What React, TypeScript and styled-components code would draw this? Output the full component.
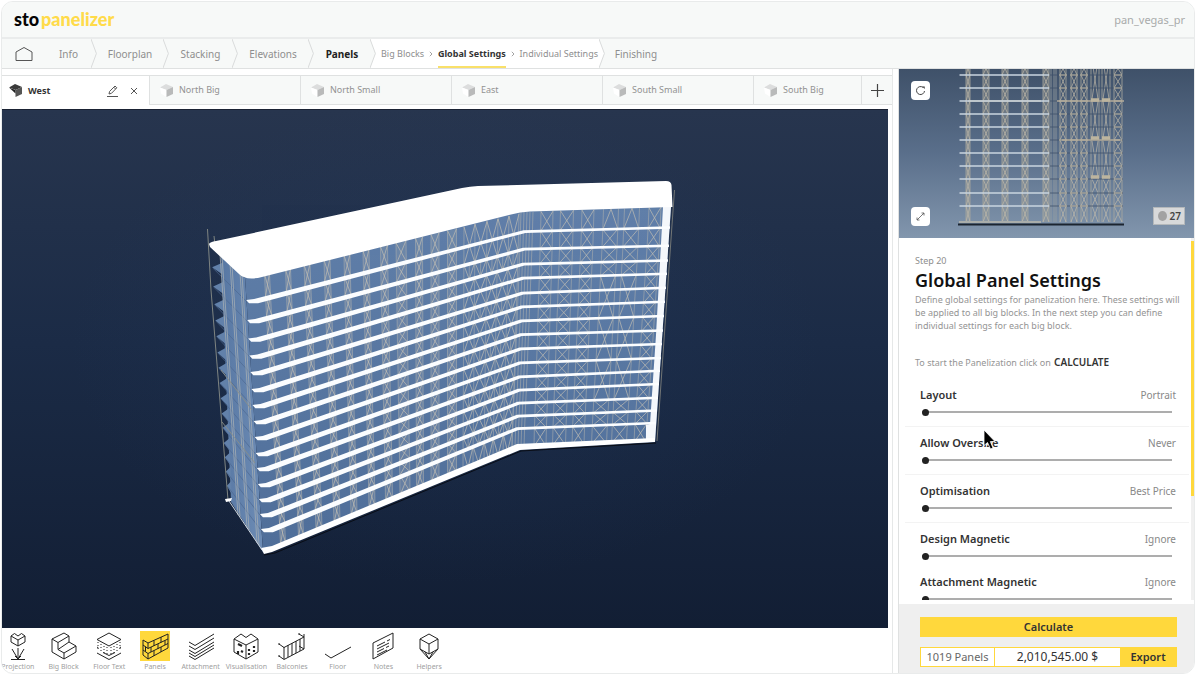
import React from "react";
import styled, { createGlobalStyle, css } from "styled-components";

const GlobalStyle = createGlobalStyle`
  * { box-sizing: border-box; }
  body { margin: 0; background: #fff; font-family: "Noto Sans", "Open Sans", sans-serif; color: #8e8e8e; }
  button, input { font-family: inherit; }
  button { border: 0; padding: 0; background: none; color: inherit; cursor: pointer; }
  svg { display: block; }
`;

const line = "#dfe1e1";
const yellow = "#ffd83c";

/* ---------- frame ---------- */

const Frame = styled.div`
  height: 100vh;
  min-height: 560px;
  padding: 1px 1px 2px 1px;
`;
const Window = styled.div`
  height: 100%;
  display: flex;
  flex-direction: column;
  border: 1px solid #e9ebeb;
  border-radius: 12px;
  overflow: hidden;
  background: #fff;
`;
const Header = styled.header`
  flex: none;
  height: 37px;
  padding: 0 9px 2px 12px;
  display: flex;
  align-items: center;
  justify-content: space-between;
  background: #f7f9f8;
  border-bottom: 2px solid #eaecec;
`;
const Logo = styled.h1`
  margin: 0;
  display: flex;
  gap: 2px;
  align-items: baseline;
  font: 900 18px/20px Lato, sans-serif;
  color: #050505;
`;
const LogoAccent = styled.span`
  color: #ffdb4a;
`;
const Project = styled.span`
  padding-top: 2px;
  font-size: 11px;
  line-height: 16px;
  color: #a9abab;
`;

/* ---------- step navigation ---------- */

const Steps = styled.nav`
  flex: none;
  height: 30px;
  display: flex;
  background: #f7f9f8;
  border-bottom: 1px solid ${line};
`;
const StepLink = styled.a<{ $w: number; $active?: boolean }>`
  flex: none;
  width: ${(p) => p.$w}px;
  display: flex;
  align-items: center;
  justify-content: center;
  font-size: 10px;
  text-decoration: none;
  color: ${(p) => (p.$active ? "#222" : "#8e8e8e")};
  font-weight: ${(p) => (p.$active ? 700 : 400)};
`;
const SubSteps = styled.div`
  flex: none;
  width: 223px;
  display: flex;
  align-items: stretch;
  justify-content: space-between;
  padding: 0 1px 0 5px;
  background: #fff;
`;
const SubStep = styled.a<{ $active?: boolean }>`
  display: flex;
  align-items: center;
  padding-top: 2px;
  border-bottom: 2px solid ${(p) => (p.$active ? "#f9e069" : "transparent")};
  font-size: 9px;
  white-space: nowrap;
  text-decoration: none;
  color: ${(p) => (p.$active ? "#333" : "#8e8e8e")};
  font-weight: ${(p) => (p.$active ? 700 : 400)};
`;
const Separator = styled.svg`
  flex: none;
  align-self: center;
`;
const ChevronSvg = styled.svg`
  flex: none;
`;

const Chevron = ({ left = "#f7f9f8", right = "#f7f9f8" }: { left?: string; right?: string }) => (
  <ChevronSvg width="6" height="29" viewBox="0 0 6 29">
    <rect width="6" height="29" fill={right} />
    <path d="M0 0L5.4 14.5L0 29Z" fill={left} />
    <path d="M0 0L5.4 14.5L0 29" fill="none" stroke="#d9dbdb" />
  </ChevronSvg>
);
const Gt = () => (
  <Separator width="4" height="6" viewBox="0 0 4 6">
    <path d="M.8 .8L3 3L.8 5.2" fill="none" stroke="#999" strokeWidth=".9" />
  </Separator>
);

/* ---------- main split ---------- */

const Main = styled.main`
  flex: 1;
  min-height: 0;
  display: flex;
`;
const Workspace = styled.section`
  flex: 1;
  min-width: 0;
  display: flex;
  flex-direction: column;
  padding: 6px 0 0;
  margin-right: 5px;
  border-right: 1px solid #e6e8e8;
`;
const Tabs = styled.div`
  flex: none;
  height: 30px;
  display: flex;
  border-top: 1px solid ${line};
`;
const Tab = styled.div<{ $active?: boolean }>`
  flex: ${(p) => (p.$active ? "none" : "0 1 151px")};
  width: ${(p) => (p.$active ? 147 : 151)}px;
  min-width: 0;
  display: flex;
  align-items: center;
  padding: 0 11px 0 ${(p) => (p.$active ? 7 : 10)}px;
  overflow: hidden;
  ${(p) =>
    !p.$active &&
    css`
      background: #f7f9f8;
      border-left: 1px solid ${line};
      border-bottom: 1px solid ${line};
    `}
  &:nth-last-child(2) { flex: 1; }
`;
const TabName = styled.button<{ $active?: boolean }>`
  flex: 1;
  min-width: 0;
  display: flex;
  align-items: center;
  gap: 6px;
  text-align: left;
  white-space: nowrap;
  font-size: 9px;
  line-height: 14px;
  color: ${(p) => (p.$active ? "#333" : "#929292")};
  font-weight: ${(p) => (p.$active ? 700 : 400)};
`;
const TabTools = styled.span`
  flex: none;
  display: flex;
  align-items: center;
  gap: 12px;
`;
const AddTab = styled.button`
  flex: none;
  width: 31px;
  display: grid;
  place-items: center;
  background: #f7f9f8;
  border-left: 1px solid ${line};
  border-bottom: 1px solid ${line};
`;
const Viewport = styled.div`
  flex: 1;
  min-height: 0;
  margin: 4px 4px 0 0;
  border-top: 1px solid #1a2233;
  background:
    radial-gradient(ellipse at 50% 45%, rgba(40, 68, 112, 0.22), rgba(20, 35, 60, 0) 60%),
    linear-gradient(#27354e, #1b2b46 45%, #121e34);
  overflow: hidden;
`;
const Scene = styled.svg`
  width: 100%;
  height: 100%;
`;

/* ---------- bottom toolbar ---------- */

const Toolbar = styled.nav`
  flex: none;
  height: 45px;
  width: 457px;
  margin-left: -7px;
  display: grid;
  grid-template-columns: repeat(10, 1fr);
`;
const Tool = styled.button`
  display: flex;
  flex-direction: column;
  align-items: center;
  padding-top: 3px;
  font-size: 7px;
  line-height: 10px;
  white-space: nowrap;
  color: #a0a0a0;
`;
const ToolIcon = styled.span<{ $active?: boolean }>`
  width: 30px;
  height: 30px;
  margin-bottom: 1px;
  background: ${(p) => (p.$active ? yellow : "transparent")};
`;

/* ---------- side panel ---------- */

const Side = styled.aside`
  flex: none;
  width: 296px;
  display: flex;
  flex-direction: column;
  border-left: 1px solid ${line};
`;
const Preview = styled.div`
  flex: none;
  height: 169px;
  display: grid;
  background: linear-gradient(#3f5169, #5a6f8b 50%, #8296ad);
  > * { grid-area: 1 / 1; min-height: 0; }
`;
const PreviewTools = styled.div`
  display: flex;
  flex-direction: column;
  justify-content: space-between;
  padding: 12px;
`;
const PreviewButton = styled.button`
  width: 19px;
  height: 19px;
  display: grid;
  place-items: center;
  border-radius: 4px;
  background: #fff;
`;
const CountBadge = styled.span`
  place-self: end;
  margin: 0 9px 13px;
  height: 18px;
  display: flex;
  align-items: center;
  gap: 3px;
  padding: 0 3px 0 4px;
  border: 1px solid #b4b8bb;
  background: #d8d9da;
  color: #444;
  font-size: 10px;
  font-weight: 600;
`;
const Dot = styled.i`
  width: 9px;
  height: 10px;
  border-radius: 50%;
  background: #a2a2a2;
`;
const PanelBody = styled.div`
  flex: 1;
  min-height: 0;
  display: flex;
  margin-bottom: 4px;
  overflow: hidden;
`;
const PanelText = styled.div`
  flex: 1;
  min-width: 0;
  padding: 16px 8px 0 16px;
`;
const ScrollTrack = styled.div`
  flex: none;
  width: 3px;
  padding-top: 3px;
  background: #f0f0f0;
`;
const ScrollThumb = styled.div`
  height: 71%;
  background: ${yellow};
`;
const StepNo = styled.p`
  margin: 0;
  font-size: 9px;
  line-height: 14px;
`;
const Title = styled.h2`
  margin: 0;
  font-size: 18px;
  line-height: 25px;
  font-weight: 600;
  color: #111;
`;
const Copy = styled.p`
  margin: 0 0 24px;
  font-size: 9px;
  line-height: 13px;
  color: #949494;
  strong { color: #333; font-size: 10px; font-weight: 600; margin-left: 1px; }
`;
const Settings = styled.div`
  margin: -14px -6px 0 -10px;
`;
const Setting = styled.div<{ $plain?: boolean }>`
  height: ${(p) => (p.$plain ? 43 : 48)}px;
  padding: 8px 13px 0 15px;
  border-bottom: 1px solid ${(p) => (p.$plain ? "transparent" : "#f3f3f3")};
`;
const SettingHead = styled.div`
  display: flex;
  justify-content: space-between;
  font-size: 10px;
  line-height: 16px;
  color: #888;
  label { font-size: 11px; font-weight: 600; color: #333; }
`;
const Slider = styled.input`
  appearance: none;
  display: block;
  width: calc(100% - 6px);
  height: 8px;
  margin: 5px 0 0 2px;
  background: linear-gradient(#adadad, #adadad) center / 100% 2px no-repeat;
  &::-webkit-slider-thumb {
    appearance: none;
    width: 7px;
    height: 7px;
    border-radius: 50%;
    background: #222;
  }
`;
const Footer = styled.footer`
  flex: none;
  height: 69px;
  padding: 13px 17px 6px 21px;
  display: flex;
  flex-direction: column;
  gap: 10px;
  background: #efefef;
`;
const Calculate = styled.button`
  height: 20px;
  background: ${yellow};
  color: #333;
  font-size: 11px;
  line-height: 20px;
  font-weight: 600;
`;
const Totals = styled.div`
  height: 20px;
  display: flex;
  border: 1px solid ${yellow};
  background: #fff;
  font-size: 12px;
  line-height: 18px;
  text-align: center;
  color: #333;
`;
const PanelTotal = styled.span`
  flex: none;
  width: 74px;
  font-size: 11px;
  color: #666;
  border-right: 1px solid ${yellow};
`;
const PriceTotal = styled.span`
  flex: 1;
`;
const ExportButton = styled.button`
  flex: none;
  width: 56px;
  background: ${yellow};
  color: #333;
  font-size: 11px;
  line-height: 18px;
  font-weight: 600;
`;
const Cursor = styled.svg`
  position: absolute;
  left: 983px;
  top: 429px;
  pointer-events: none;
`;

/* ---------- building drawing ---------- */

type P = [number, number];
const f = (p: P) => `${p[0].toFixed(1)} ${p[1].toFixed(1)}`;
const seg = (a: P, b: P) => `M${f(a)}L${f(b)}`;

const leftY = [279, 301, 321, 339.5, 356.5, 373, 390, 406, 422, 438, 454, 469, 485, 500, 515, 530, 552];
const kneeY = [212, 231.7, 249.3, 264.3, 278.3, 293.3, 307, 321, 334.7, 349, 363, 377, 390.3, 403.3, 416.3, 428.7, 447];
const rightY = [207, 227.7, 246, 260.7, 274, 288, 302, 316.3, 330.7, 344.3, 358.3, 371, 384.3, 398, 410.7, 423.3, 441.7];
const rows = leftY.length - 1;
const L = (k: number): P => [245 + (k / rows) * 17, leftY[k]];
const K = (k: number): P => [526 - (k / rows) * 8, kneeY[k]];
const R = (k: number): P => [671 - (k / rows) * 16, rightY[k]];

const onLeft = (top: number, bottom: number, k: number): P => {
  const x = top + (bottom - top) * (k / rows);
  const a = L(k), b = K(k);
  return [x, a[1] + ((b[1] - a[1]) * (x - a[0])) / (b[0] - a[0])];
};
const onRight = (top: number, bottom: number, k: number): P => {
  const x = top + (bottom - top) * (k / rows);
  const a = K(k), b = R(k);
  return [x, a[1] + ((b[1] - a[1]) * (x - a[0])) / (b[0] - a[0])];
};

const leftCols: [number, number, number][] = [
  [267, 283, 2.5], [288, 301, 2.5], [307, 319, 3], [327, 337, 3], [347, 354, 3], [366, 372, 3],
  [384, 389, 3.5], [401, 405, 5], [419, 420, 3.5], [435, 435, 4], [452, 452, 4.5],
];
const zigCols: [number, number][] = [[464, 463], [475, 473], [487, 484], [498, 493], [509, 503], [519, 512]];
const rightCols: [number, number, number][] = [
  [547, 540, 6], [567, 559, 6.5], [588, 578, 6], [611, 599, 7.5], [632, 619, 7.5], [655, 640, 6],
];

let fills = "";
let posts = "";
let braces = "";
leftCols.forEach(([t, b, w]) => {
  fills += `M${f(onLeft(t - w, b - w, 0))}L${f(onLeft(t + w, b + w, 0))}L${f(onLeft(t + w, b + w, rows))}L${f(onLeft(t - w, b - w, rows))}Z`;
});
for (let k = 0; k < rows; k++) {
  leftCols.forEach(([t, b, w]) => {
    const a0 = onLeft(t - w, b - w, k), a1 = onLeft(t - w, b - w, k + 1);
    const b0 = onLeft(t + w, b + w, k), b1 = onLeft(t + w, b + w, k + 1);
    posts += seg(a0, a1) + seg(b0, b1);
    braces += seg(a0, b1) + seg(b0, a1);
  });
  zigCols.forEach(([t, b], i) => {
    const next = zigCols[i + 1];
    const a0 = onLeft(t, b, k), a1 = onLeft(t, b, k + 1);
    posts += seg(a0, a1);
    if (next) {
      const m0 = onLeft((t + next[0]) / 2, (b + next[1]) / 2, k);
      const m1 = onLeft((t + next[0]) / 2, (b + next[1]) / 2, k + 1);
      const n0 = onLeft(next[0], next[1], k), n1 = onLeft(next[0], next[1], k + 1);
      braces += k % 3 === 1 ? seg(m0, a1) + seg(m0, n1) : seg(a0, m1) + seg(m1, n0);
      if (k % 3 === 2) posts += seg(m0, m1);
    }
  });
  [521, 524, 527, 530, 533].forEach((x) => {
    posts += seg([x - (k / rows) * 9, kneeY[k]], [x - ((k + 1) / rows) * 9, kneeY[k + 1]]);
  });
  rightCols.forEach(([t, b, w], i) => {
    const a0 = onRight(t - w, b - w, k), a1 = onRight(t - w, b - w, k + 1);
    const b0 = onRight(t + w, b + w, k), b1 = onRight(t + w, b + w, k + 1);
    posts += seg(a0, a1) + seg(b0, b1);
    if ((i === 3 || i === 4) && k >= 4 && k < 13) {
      if ((k - 4) % 3 === 0) {
        const far = k + 3;
        braces += seg(a0, onRight(t + w, b + w, far)) + seg(b0, onRight(t - w, b - w, far)) + seg(a0, b0);
      }
    } else if ((i === 3 || i === 4) && k === 0) {
      const m = onRight(t, b, 0);
      braces += seg(m, a1) + seg(m, b1);
    } else {
      braces += seg(a0, b1) + seg(b0, a1);
    }
  });
}

const slabs = Array.from({ length: rows - 1 }, (_, i) => {
  const k = i + 1;
  const l = L(k), n = K(k), r = R(k);
  return `M${f([l[0], l[1] - 1])}L${f([l[0] + 8, l[1] - 2])}L${f([n[0] - 2, n[1] - 1.5])}L${f([r[0], r[1] - 1.5])}` +
    `L${f([r[0], r[1] + 1])}L${f([n[0], n[1] + 1.3])}L${f([l[0] + 12, l[1] + 2.2])}L${f([l[0] + 3, l[1] + 2.2])}Z`;
}).join("");

/* balcony fins that stand out past the narrow side of the tower */
const fins = Array.from({ length: rows - 1 }, (_, i) => {
  const k = i + 1;
  const y = leftY[k] - 33 - 12 * (k / rows);
  const outer = 211 + 17 * (k / rows);
  const inner = 222 + 9 * (k / rows);
  return `M${outer} ${y}L${inner + 1} ${y - 5}V${y + 8}Z`;
}).join("");
const floorEdges = Array.from({ length: rows - 1 }, (_, i) => {
  const k = i + 1;
  return seg([212 + 17 * (k / rows), leftY[k] - 32 - 12 * (k / rows)], L(k));
}).join("");

const sideTop: P[] = [[220, 254], [230, 263], [240, 272]];
const sideBottom: P[] = [[238, 515], [247, 528], [257, 543]];

const Building = () => (
  <Scene viewBox="2 110 886 518" preserveAspectRatio="xMidYMid slice" role="img" aria-label="Building model, west side">
    <defs>
      <linearGradient id="glass" x1="0" y1="0" x2="0" y2="1">
        <stop offset="0" stopColor="#607fa9" />
        <stop offset="1" stopColor="#4f6e99" />
      </linearGradient>
      <linearGradient id="flank" x1="0" y1="0" x2="1" y2="0">
        <stop offset="0" stopColor="#5777a3" />
        <stop offset="1" stopColor="#6d8cb5" />
      </linearGradient>
    </defs>
    <path d="M221 252L245 278L263 552L231 502Z" fill="url(#flank)" />
    <path d={fins} fill="#6281aa" />
    <path d={floorEdges} stroke="#4d6890" strokeWidth=".7" />
    <path
      d={sideTop.map((t, i) => seg(t, sideBottom[i]) + seg([t[0] + 2, t[1] + 2], [sideBottom[i][0] + 2, sideBottom[i][1] + 2])).join("")}
      stroke="#a4adb4" strokeWidth=".8"
    />
    <path d="M207.500 229L211 290L228 500M214 236L215 245M221 370L252 410M222 422L255 463" fill="none" stroke="#8a8f88" strokeWidth=".9" />
    <path d="M245 277L440 231L526 210L671 205L655 442L518 447L263 551Z" fill="url(#glass)" />
    <path d={fills} fill="#8d9cae" opacity=".35" />
    <path d={posts} stroke="#a9adad" strokeWidth=".8" opacity=".75" />
    <path d={braces} stroke="#c3bfb4" strokeWidth=".85" opacity=".8" fill="none" />
    <path d="M663 207L671 207L655 442H646V425L650 424L656 335Z" fill="#f4f7fb" />
    <path d={slabs} fill="#fbfdff" />
    <path d="M261 548L272 546L517 444L655 438L655 442L520 450L272 552L264 554Z" fill="#fff" />
    <path d="M264 555L275 553L521 451L656 443" fill="none" stroke="#090d16" />
    <path d="M225 499l7 -1l-1 3l-5 1z" fill="#fff" />
    <path d="M229 501L262 550" stroke="#cdd5de" />
    <path d="M674.500 190L672 225L657 441" fill="none" stroke="#7c7e7a" strokeWidth=".9" />
    <path d="M209 244Q210 242 216 241L462 188Q470 186.500 478 186L666 181Q671 181 671.500 185L672.500 207L530 211.500Q520 212 511 214.500L262 277Q246 281 239 274L210 247Z" fill="#fff" />
  </Scene>
);

/* ---------- preview drawing ---------- */

const floorYs = [75, 88, 101, 114, 127, 140, 153, 166, 179, 193, 206, 222];
let tower = "";
let towerX = "";
const truss = (cx: number, w: number, y0: number, y1: number) => {
  towerX += `M${cx - w} ${y0}L${cx + w} ${y1}M${cx + w} ${y0}L${cx - w} ${y1}`;
};
([[968, 2], [986, 3], [1005, 3], [1025, 3], [1046, 3], [1063, 3], [1074, 3], [1084, 3], [1118, 4]] as P[]).forEach(([cx, w]) => {
  tower += `M${cx - w} 69V222M${cx + w} 69V222`;
  [62, ...floorYs].slice(0, -1).forEach((y, i) => truss(cx, w, y, floorYs[i]));
});
[1095, 1106].forEach((cx) => {
  tower += `M${cx - 4} 69V222M${cx + 4} 69V222`;
  [[60, 99], [101, 138], [141, 177], [179, 193], [193, 206], [206, 222]].forEach(([a, b]) => truss(cx, 3, a, b));
});

const Elevation = () => (
  <Scene viewBox="899 69 295 169" preserveAspectRatio="xMidYMid slice" role="img" aria-label="Elevation preview">
    <path d="M966 69h4V222h-4zM983 69h6V222h-6zM1002 69h6V222h-6zM1022 69h6V222h-6zM1043 69h6V222h-6z" fill="#a9a698" opacity=".35" />
    <path d={tower} stroke="#aaa99f" strokeWidth=".9" opacity=".9" />
    <path d={towerX} stroke="#c4bdab" strokeWidth=".8" opacity=".85" />
    <path d="M1051 69V222M1054 69V222M1056 69V222" stroke="#99a0a2" opacity=".8" />
    <path d={floorYs.slice(0, -1).map((y) => `M1050 ${y}H1123`).join("")} stroke="#40526a" strokeWidth=".8" />
    <path d={floorYs.slice(0, -1).map((y) => [1063, 1074, 1084, 1118].map((x) => `M${x - 4} ${y}h8`).join("")).join("")} stroke="#c9bfa8" strokeWidth="1.2" />
    <path d="M968 101H1041M1057 101H1124M986 140H1024M1062 140H1120" stroke="#b5ad9c" strokeWidth="1.400" />
    <path d="M1091 100h8M1102 100h8M1091 138h8M1102 138h8M1091 177h8M1102 177h8" stroke="#bdb59f" strokeWidth="3.500" />
    <path d={floorYs.slice(0, -1).map((y) => `M959.500 ${y}H1049`).join("")} stroke="#c9d5df" strokeWidth="1.300" />
    <path d="M959 222H1041" stroke="#a9adab" strokeWidth="2" />
    <path d="M958 224.500H1124" stroke="#1b2430" strokeWidth="2" />
  </Scene>
);

/* ---------- icons ---------- */

const Cube = ({ dark }: { dark?: boolean }) => (
  <svg width="13" height="13" viewBox="0 0 13 13">
    <path d="M0 3.500L6 0L13 3L6.500 6Z" fill={dark ? "#3a3a3a" : "#dcdddd"} />
    <path d="M0 3.500L6.500 6V13L1 9.500Z" fill="#fff" />
    <path d="M6.500 6L13 3V10L6.500 13Z" fill={dark ? "#555" : "#b9baba"} />
    {dark && <path d="M0 3.500L6.500 6V9.500Z" fill="#222" />}
  </svg>
);

const icons: Record<string, React.ReactNode> = {
  Projection: <path d="M15 5l3.500-2.500L22 5v6l-7 4-7-4V5l3.500-2.500zM8 5l7 4 7-4M15 9v6M15 17v10.500M8 28.500h14M9 18l6 10 6-10M12 25l3 3 3-3" />,
  "Big Block": <path d="M3 8L15 2l5 3v6l7 4v6l-12 7-12-7zM3 8l6 3.500L20 5M9 11.500v7l6 3.500 12-7M15 22v6M9 18.500L20 11" />,
  "Floor Text": (
    <>
      <path d="M15 2l12 6.500L15 15 3 8.500zM3 16l1.500 1M27 16l-1.500 1M3 22l12 6.500L27 22M9 21.500l6 3 6-3" />
      <path d="M4 11v7M7 13v7M10 15v7M13 16v7M17 16v7M20 15v7M23 13v7M26 11v7" strokeDasharray="1 2" />
    </>
  ),
  Panels: <path d="M3 9l5 3L28 3v14L8 28l-5-4zM3 14l5 3.500L28 8M3 19l5 3.500L28 12.500M8 12v5.500M5.500 15.500v5M8 22.500V28M14 9.500v5.500M21 6v5.500M11 16v5M18 13v5M25 9.500v4.500M14 19.500v5.500M21 16v5" />,
  Attachment: <path d="M3 11l6 3.500L28 3M3 15l6 3.500L28 7M3 19l6 3.500L28 11M3 22l6 3.500L28 14M3 25l6 3.500L28 17" />,
  Visualisation: (
    <>
      <path d="M3 8l7-5 5 3.500 5-3.500 7 5v13l-12 7-12-7zM3 8l12 6 12-6M15 14v14" />
      <path d="M7 13l4 2M7 20v3M10 20l2 1M18 18v2M18 22v2M23 15v2M23 19v2" strokeWidth="2.200" />
    </>
  ),
  Balconies: <path d="M2 13l5 3.500L27 6l-5-3M2 25l5 3.500L27 18l-5-3M7 16v12M11 14v12M15 12v12M19 10v12M23 8v12M27 3v15M2 12v2M2 24v2M22 2v2" />,
  Floor: <path d="M2 23l6 4L28 16" />,
  Notes: <path d="M5 12L25 2v15L5 28zM9 15l8-4M19 10l3-1.500M9 18l12-6M9 21l7-3.500M18 16.500l3-1.500M9 24l10-5" />,
  Helpers: <path d="M15 3l9 5v10l-9 10-9-10V8zM6 8l9 5 9-5M15 13v10M6 18l9 5 9-5M11 21l4 7 4-7" />,
};

const tabs = ["North Big", "North Small", "East", "South Small", "South Big"];
const settings: [string, string][] = [
  ["Layout", "Portrait"],
  ["Allow Oversize", "Never"],
  ["Optimisation", "Best Price"],
  ["Design Magnetic", "Ignore"],
  ["Attachment Magnetic", "Ignore"],
];

export default function App() {
  return (
    <Frame>
      <GlobalStyle />
      <Window>
        <Header>
          <Logo>
            <span>sto</span>
            <LogoAccent>panelizer</LogoAccent>
          </Logo>
          <Project>pan_vegas_pr</Project>
        </Header>
        <Steps>
          <StepLink href="#home" $w={44} aria-label="Home">
            <svg width="18" height="16" viewBox="0 0 18 16" fill="none" stroke="#555">
              <path d="M1 6L9 1.500L17 6V14.500H1Z" strokeLinejoin="round" />
            </svg>
          </StepLink>
          <StepLink href="#info" $w={45}>Info</StepLink>
          <Chevron />
          <StepLink href="#floorplan" $w={66}>Floorplan</StepLink>
          <Chevron />
          <StepLink href="#stacking" $w={63}>Stacking</StepLink>
          <Chevron />
          <StepLink href="#elevations" $w={70}>Elevations</StepLink>
          <Chevron />
          <StepLink href="#panels" $w={56} $active>Panels</StepLink>
          <Chevron right="#fff" />
          <SubSteps>
            <SubStep href="#big-blocks">Big Blocks</SubStep>
            <Gt />
            <SubStep href="#global" $active>Global Settings</SubStep>
            <Gt />
            <SubStep href="#individual">Individual Settings</SubStep>
          </SubSteps>
          <Chevron left="#fff" />
          <StepLink href="#finishing" $w={62}>Finishing</StepLink>
        </Steps>
        <Main>
          <Workspace>
            <Tabs>
              <Tab $active>
                <TabName $active><Cube dark />West</TabName>
                <TabTools>
                  <button aria-label="Rename tab">
                    <svg width="11" height="12" viewBox="0 0 11 12" fill="none" stroke="#555">
                      <path d="M2 9l.6-2.600L8 1l1.800 1.800L4.500 8.300zM6.800 2.200L8.600 4M0 11.500h11" />
                    </svg>
                  </button>
                  <button aria-label="Close tab">
                    <svg width="8" height="8" viewBox="0 0 8 8" fill="none" stroke="#555">
                      <path d="M1 1l6 6M7 1L1 7" />
                    </svg>
                  </button>
                </TabTools>
              </Tab>
              {tabs.map((t) => (
                <Tab key={t}><TabName><Cube />{t}</TabName></Tab>
              ))}
              <AddTab aria-label="Add tab">
                <svg width="13" height="13" viewBox="0 0 13 13" stroke="#444" strokeWidth="1.200">
                  <path d="M6.500 0v13M0 6.500h13" />
                </svg>
              </AddTab>
            </Tabs>
            <Viewport><Building /></Viewport>
            <Toolbar>
              {Object.entries(icons).map(([name, icon]) => (
                <Tool key={name}>
                  <ToolIcon $active={name === "Panels"}>
                    <svg width="30" height="30" viewBox="0 0 30 30" fill="none" stroke="#222" strokeLinejoin="round">{icon}</svg>
                  </ToolIcon>
                  {name}
                </Tool>
              ))}
            </Toolbar>
          </Workspace>
          <Side>
            <Preview>
              <Elevation />
              <PreviewTools>
                <PreviewButton aria-label="Reset view">
                  <svg width="11" height="11" viewBox="0 0 11 11" fill="none" stroke="#444">
                    <path d="M9.500 6A4 4 0 1 1 8 2.400" />
                    <path d="M7.200 1.500h2.500v2.500z" fill="#333" stroke="none" />
                  </svg>
                </PreviewButton>
                <PreviewButton aria-label="Expand view">
                  <svg width="9" height="9" viewBox="0 0 9 9" fill="none" stroke="#555" strokeWidth=".8">
                    <path d="M1 8L8 1M5.500 1H8V3.500M1 5.500V8H3.500" />
                  </svg>
                </PreviewButton>
              </PreviewTools>
              <CountBadge><Dot />27</CountBadge>
            </Preview>
            <PanelBody>
              <PanelText>
                <StepNo>Step 20</StepNo>
                <Title>Global Panel Settings</Title>
                <Copy>
                  Define global settings for panelization here. These settings will be applied to all big blocks. In the
                  next step you can define individual settings for each big block.
                </Copy>
                <Copy>To start the Panelization click on <strong>CALCULATE</strong></Copy>
                <Settings>
                  {settings.map(([name, value], i) => (
                    <Setting key={name} $plain={i > 2}>
                      <SettingHead>
                        <label htmlFor={`s${i}`}>{name}</label>
                        <span>{value}</span>
                      </SettingHead>
                      <Slider id={`s${i}`} type="range" min={0} max={2} defaultValue={0} />
                    </Setting>
                  ))}
                </Settings>
              </PanelText>
              <ScrollTrack><ScrollThumb /></ScrollTrack>
            </PanelBody>
            <Footer>
              <Calculate>Calculate</Calculate>
              <Totals>
                <PanelTotal>1019 Panels</PanelTotal>
                <PriceTotal>2,010,545.00 $</PriceTotal>
                <ExportButton>Export</ExportButton>
              </Totals>
            </Footer>
          </Side>
        </Main>
      </Window>
      <Cursor width="14" height="22" viewBox="0 0 14 22">
        <path d="M1 1V16.500L4.500 13.500L7.500 20L10 19L7.300 12.500H12Z" fill="#000" stroke="#fff" strokeWidth=".8" />
      </Cursor>
    </Frame>
  );
}
